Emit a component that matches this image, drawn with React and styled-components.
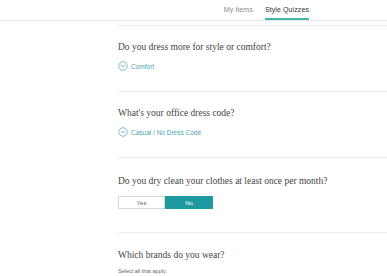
import styled, { createGlobalStyle } from "styled-components";

const GlobalStyle = createGlobalStyle`
  html, body {
    margin: 0;
    padding: 0;
    background: #ffffff;
  }
  body {
    font-family: "Liberation Sans", Arial, sans-serif;
    overflow: hidden;
  }
`;

const Header = styled.header`
  height: 20px;
  border-bottom: 1px solid #e6e6e6;
  display: flex;
  justify-content: flex-end;
  padding-right: 78px;
`;

const Tabs = styled.nav`
  display: flex;
  gap: 12px;
  height: 100%;
`;

const Tab = styled.div`
  display: flex;
  align-items: center;
  height: 100%;
  box-sizing: border-box;
  padding-top: 1px;
  font-size: 7px;
  letter-spacing: 0.1px;
  color: ${(p) => (p.$active ? "#333333" : "#8a8a8a")};
  border-bottom: 2px solid ${(p) => (p.$active ? "#3fb8ad" : "transparent")};
  margin-bottom: -1px;
`;

const Layout = styled.div`
  display: grid;
  grid-template-columns: 118px 1fr;
  padding-top: 4px;
`;

const Sidebar = styled.aside``;

const Quizzes = styled.main`
  display: flex;
  flex-direction: column;
`;

const Question = styled.section`
  border-top: 1px solid #ececec;
  padding: ${(p) => p.$top || 15}px 0 ${(p) => p.$bottom}px;
  display: flex;
  flex-direction: column;
`;

const Title = styled.h3`
  margin: 0;
  font-family: "Liberation Serif", "Times New Roman", serif;
  font-weight: normal;
  font-size: 9.5px;
  line-height: 13px;
  color: #444444;
`;

const Answer = styled.div`
  display: flex;
  align-items: center;
  gap: 3px;
  margin-top: 7px;
  height: 10px;
  font-size: 6.5px;
  color: #4aa6b3;
`;

const Toggle = styled.div`
  display: flex;
  margin-top: 8px;
`;

const ToggleButton = styled.div`
  width: ${(p) => p.$width}px;
  height: 13px;
  box-sizing: border-box;
  display: flex;
  align-items: center;
  justify-content: center;
  font-size: 6px;
  color: ${(p) => (p.$on ? "#ffffff" : "#666666")};
  background: ${(p) => (p.$on ? "#1e999f" : "#ffffff")};
  border: 1px solid ${(p) => (p.$on ? "#1e999f" : "#d8d8d8")};
`;

const Hint = styled.div`
  margin-top: 6px;
  font-size: 5.5px;
  line-height: 7px;
  color: #666666;
`;

function ChevronCircle() {
  return (
    <svg width="10" height="10" viewBox="0 0 20 20" fill="none">
      <circle cx="10" cy="10" r="8.5" stroke="#4aa6b3" strokeWidth="1.4" />
      <path d="M6.5 8.5 L10 12 L13.5 8.5" stroke="#4aa6b3" strokeWidth="1.4" strokeLinecap="round" strokeLinejoin="round" />
    </svg>
  );
}

export default function App() {
  return (
    <>
      <GlobalStyle />
      <Header>
        <Tabs>
          <Tab>My Items</Tab>
          <Tab $active>Style Quizzes</Tab>
        </Tabs>
      </Header>
      <Layout>
        <Sidebar />
        <Quizzes>
          <Question $bottom={20}>
            <Title>Do you dress more for style or comfort?</Title>
            <Answer>
              <ChevronCircle />
              Comfort
            </Answer>
          </Question>
          <Question $bottom={20}>
            <Title>What's your office dress code?</Title>
            <Answer>
              <ChevronCircle />
              Casual / No Dress Code
            </Answer>
          </Question>
          <Question $top={17} $bottom={23}>
            <Title>Do you dry clean your clothes at least once per month?</Title>
            <Toggle>
              <ToggleButton $width={47}>Yes</ToggleButton>
              <ToggleButton $width={48} $on>No</ToggleButton>
            </Toggle>
          </Question>
          <Question $top={16} $bottom={0}>
            <Title>Which brands do you wear?</Title>
            <Hint>Select all that apply.</Hint>
          </Question>
        </Quizzes>
      </Layout>
    </>
  );
}
